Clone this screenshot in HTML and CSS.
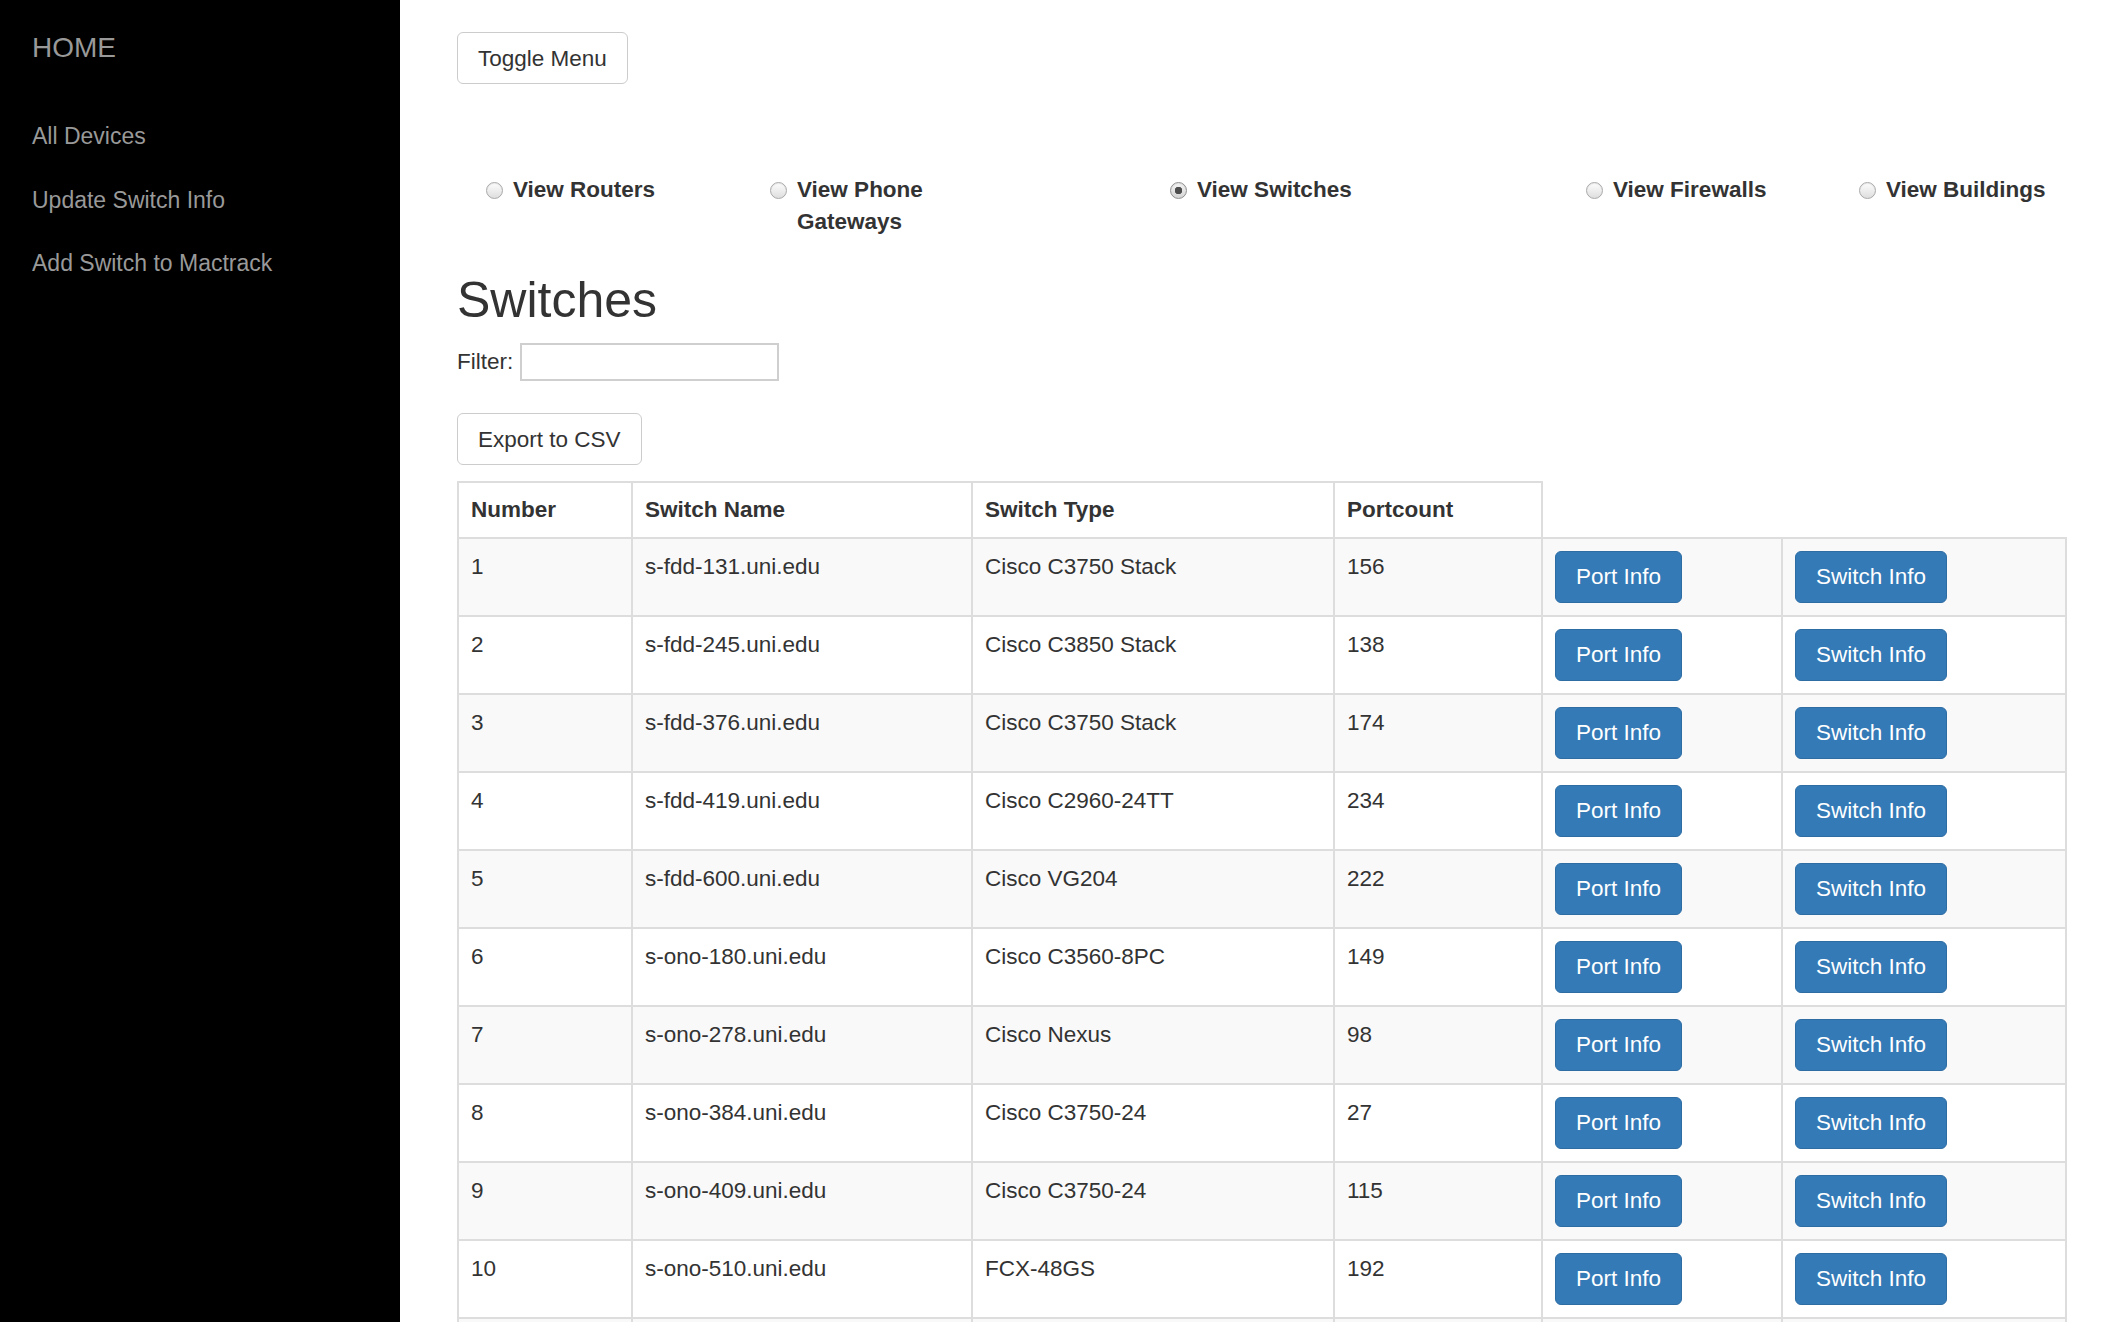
FILE: index.html
```html
<!DOCTYPE html>
<html lang="en">
<head>
    <meta charset="UTF-8">
    <meta name="viewport" content="width=device-width, initial-scale=1.0">
    <title>Switches</title>
    <link rel="stylesheet" href="styles.css">
</head>
<body>
    <div class="wrapper" id="wrapper">
        <nav class="sidebar">
            <a class="sidebar-brand" href="#">HOME</a>
            <ul class="sidebar-nav">
                <li><a href="#">All Devices</a></li>
                <li><a href="#">Update Switch Info</a></li>
                <li><a href="#">Add Switch to Mactrack</a></li>
            </ul>
        </nav>

        <main class="page-content">
            <button class="btn btn-default" id="menuToggle">Toggle Menu</button>

            <form class="view-options">
                <label class="view-option"><input type="radio" name="view" value="routers"><span>View Routers</span></label>
                <label class="view-option"><input type="radio" name="view" value="gateways"><span>View Phone Gateways</span></label>
                <label class="view-option"><input type="radio" name="view" value="switches" checked><span>View Switches</span></label>
                <label class="view-option"><input type="radio" name="view" value="firewalls"><span>View Firewalls</span></label>
                <label class="view-option"><input type="radio" name="view" value="buildings"><span>View Buildings</span></label>
            </form>

            <h2>Switches</h2>
            <div class="filter">
                <label for="filterInput">Filter:</label>
                <input type="text" id="filterInput">
            </div>

            <button class="btn btn-default export-btn">Export to CSV</button>

            <table class="device-table" id="deviceTable">
                <colgroup>
                    <col class="col-number">
                    <col class="col-name">
                    <col class="col-type">
                    <col class="col-ports">
                    <col class="col-action">
                    <col class="col-action-wide">
                </colgroup>
                <thead>
                    <tr>
                        <th>Number</th>
                        <th>Switch Name</th>
                        <th>Switch Type</th>
                        <th>Portcount</th>
                    </tr>
                </thead>
                <tbody>
                    <tr>
                        <td>1</td><td>s-fdd-131.uni.edu</td><td>Cisco C3750 Stack</td><td>156</td>
                        <td><button class="btn btn-primary">Port Info</button></td>
                        <td><button class="btn btn-primary">Switch Info</button></td>
                    </tr>
                    <tr>
                        <td>2</td><td>s-fdd-245.uni.edu</td><td>Cisco C3850 Stack</td><td>138</td>
                        <td><button class="btn btn-primary">Port Info</button></td>
                        <td><button class="btn btn-primary">Switch Info</button></td>
                    </tr>
                    <tr>
                        <td>3</td><td>s-fdd-376.uni.edu</td><td>Cisco C3750 Stack</td><td>174</td>
                        <td><button class="btn btn-primary">Port Info</button></td>
                        <td><button class="btn btn-primary">Switch Info</button></td>
                    </tr>
                    <tr>
                        <td>4</td><td>s-fdd-419.uni.edu</td><td>Cisco C2960-24TT</td><td>234</td>
                        <td><button class="btn btn-primary">Port Info</button></td>
                        <td><button class="btn btn-primary">Switch Info</button></td>
                    </tr>
                    <tr>
                        <td>5</td><td>s-fdd-600.uni.edu</td><td>Cisco VG204</td><td>222</td>
                        <td><button class="btn btn-primary">Port Info</button></td>
                        <td><button class="btn btn-primary">Switch Info</button></td>
                    </tr>
                    <tr>
                        <td>6</td><td>s-ono-180.uni.edu</td><td>Cisco C3560-8PC</td><td>149</td>
                        <td><button class="btn btn-primary">Port Info</button></td>
                        <td><button class="btn btn-primary">Switch Info</button></td>
                    </tr>
                    <tr>
                        <td>7</td><td>s-ono-278.uni.edu</td><td>Cisco Nexus</td><td>98</td>
                        <td><button class="btn btn-primary">Port Info</button></td>
                        <td><button class="btn btn-primary">Switch Info</button></td>
                    </tr>
                    <tr>
                        <td>8</td><td>s-ono-384.uni.edu</td><td>Cisco C3750-24</td><td>27</td>
                        <td><button class="btn btn-primary">Port Info</button></td>
                        <td><button class="btn btn-primary">Switch Info</button></td>
                    </tr>
                    <tr>
                        <td>9</td><td>s-ono-409.uni.edu</td><td>Cisco C3750-24</td><td>115</td>
                        <td><button class="btn btn-primary">Port Info</button></td>
                        <td><button class="btn btn-primary">Switch Info</button></td>
                    </tr>
                    <tr>
                        <td>10</td><td>s-ono-510.uni.edu</td><td>FCX-48GS</td><td>192</td>
                        <td><button class="btn btn-primary">Port Info</button></td>
                        <td><button class="btn btn-primary">Switch Info</button></td>
                    </tr>
                    <tr>
                        <td>11</td><td>s-ono-617.uni.edu</td><td>Cisco C3750-48</td><td>52</td>
                        <td><button class="btn btn-primary">Port Info</button></td>
                        <td><button class="btn btn-primary">Switch Info</button></td>
                    </tr>
                </tbody>
            </table>
        </main>
    </div>

    <script>
        const wrapper = document.getElementById('wrapper');
        const menuToggle = document.getElementById('menuToggle');
        const filterInput = document.getElementById('filterInput');
        const rows = document.querySelectorAll('#deviceTable tbody tr');

        menuToggle.addEventListener('click', () => {
            wrapper.classList.toggle('menu-hidden');
        });

        filterInput.addEventListener('input', () => {
            const term = filterInput.value.toLowerCase();
            rows.forEach(row => {
                row.style.display = row.textContent.toLowerCase().includes(term) ? '' : 'none';
            });
        });
    </script>
</body>
</html>
```

FILE: styles.css
```css
body {
    margin: 0;
    font-family: "Liberation Sans", Arial, sans-serif;
    font-size: 22.5px;
    line-height: 32px;
    color: #333;
    background-color: #fff;
}
.wrapper {
    display: flex;
    min-height: 100vh;
}
.sidebar {
    flex: 0 0 400px;
    background-color: #000;
    padding: 28px 0 0 32px;
    box-sizing: border-box;
}
.menu-hidden .sidebar {
    display: none;
}
.sidebar-brand {
    display: block;
    font-size: 28px;
    line-height: 40px;
    color: #999;
    text-decoration: none;
}
.sidebar-nav {
    list-style: none;
    margin: 52px 0 0;
    padding: 0;
    font-size: 23px;
}
.sidebar-nav li {
    margin-bottom: 31.5px;
}
.sidebar-nav a {
    color: #999;
    text-decoration: none;
}
.page-content {
    flex: 1;
    padding: 32px 57px 0;
    min-width: 0;
}
.btn {
    display: inline-block;
    font-family: inherit;
    font-size: 22.5px;
    line-height: 32px;
    padding: 9px 20px;
    border: 1px solid transparent;
    border-radius: 6px;
    cursor: pointer;
}
.btn-default {
    color: #333;
    background-color: #fff;
    border-color: #ccc;
    padding: 10px 20px 8px;
}
.btn-default:hover {
    background-color: #e6e6e6;
}
.btn-primary {
    color: #fff;
    background-color: #337ab7;
    border-color: #2e6da4;
}
.btn-primary:hover {
    background-color: #286090;
}
.view-options {
    display: grid;
    grid-template-columns: 284px 400px 416px 273px auto;
    align-items: start;
    margin: 90px 0 0;
    padding-left: 29px;
}
.view-option {
    display: flex;
    align-items: flex-start;
    font-weight: bold;
    cursor: pointer;
}
.view-option span {
    max-width: 200px;
}
.view-option input {
    appearance: none;
    -webkit-appearance: none;
    flex: 0 0 auto;
    width: 17px;
    height: 17px;
    margin: 8px 10px 0 0;
    border: 1px solid #a9a9a9;
    border-radius: 50%;
    background: linear-gradient(#fdfdfd, #dedede);
    box-shadow: inset 0 1px 1px rgba(0, 0, 0, 0.08);
    box-sizing: border-box;
}
.view-option input:checked {
    background: radial-gradient(circle, #4d4d4d 0 3.5px, transparent 4px), linear-gradient(#f4f4f4, #d4d4d4);
    border-color: #8f8f8f;
}
h2 {
    font-size: 50px;
    font-weight: 500;
    line-height: 53px;
    margin: 36px 0 0;
}
.filter {
    display: flex;
    align-items: center;
    margin-top: 16px;
}
.filter input {
    width: 259px;
    height: 38px;
    margin-left: 7px;
    border: 2px solid #cfcfcf;
    box-sizing: border-box;
    font-family: inherit;
    font-size: 22.5px;
    padding: 0 6px;
}
.export-btn {
    margin-top: 32px;
}
.device-table {
    margin-top: 16px;
    border-collapse: collapse;
    table-layout: fixed;
    width: 1608px;
}
.col-number { width: 174px; }
.col-name { width: 340px; }
.col-type { width: 362px; }
.col-ports { width: 208px; }
.col-action { width: 240px; }
.col-action-wide { width: 284px; }
.device-table th,
.device-table td {
    border: 2px solid #ddd;
    text-align: left;
    vertical-align: top;
    white-space: nowrap;
}
.device-table th {
    padding: 11px 12px;
    vertical-align: bottom;
    font-weight: bold;
}
.device-table td {
    padding: 12px;
}
.device-table tbody tr:nth-child(odd) {
    background-color: #f9f9f9;
}
```
